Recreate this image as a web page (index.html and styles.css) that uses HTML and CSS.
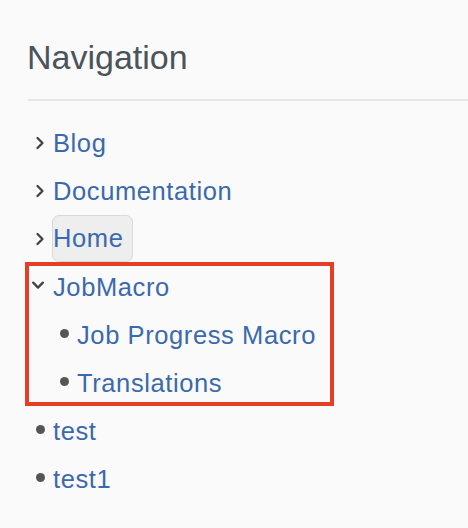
FILE: index.html
```html
<!DOCTYPE html>
<html lang="en">
<head>
<meta charset="utf-8">
<title>Navigation</title>
<link rel="stylesheet" href="styles.css">
</head>
<body>
<nav class="sidebar">
  <h2 class="title">Navigation</h2>
  <ul class="tree">
    <li class="node">
      <div class="row">
        <span class="icon"><svg width="24" height="24" viewBox="0 0 24 24"><path d="M9.5 7 L14.5 12 L9.5 17" class="chev"/></svg></span>
        <a class="link" href="#">Blog</a>
      </div>
    </li>
    <li class="node">
      <div class="row">
        <span class="icon"><svg width="24" height="24" viewBox="0 0 24 24"><path d="M9.5 7 L14.5 12 L9.5 17" class="chev"/></svg></span>
        <a class="link" href="#">Documentation</a>
      </div>
    </li>
    <li class="node">
      <div class="row">
        <span class="icon"><svg width="24" height="24" viewBox="0 0 24 24"><path d="M9.5 7 L14.5 12 L9.5 17" class="chev"/></svg></span>
        <a class="link link-active" href="#">Home</a>
      </div>
    </li>
    <li class="node node-marked">
      <div class="row">
        <span class="icon"><svg width="24" height="24" viewBox="0 0 24 24"><path d="M5.2 7.6 L10 12.6 L14.8 7.6" class="chev"/></svg></span>
        <a class="link" href="#">JobMacro</a>
      </div>
      <ul class="tree tree-nested">
        <li class="node">
          <div class="row">
            <span class="icon"><span class="dot"></span></span>
            <a class="link" href="#">Job Progress Macro</a>
          </div>
        </li>
        <li class="node">
          <div class="row">
            <span class="icon"><span class="dot"></span></span>
            <a class="link" href="#">Translations</a>
          </div>
        </li>
      </ul>
    </li>
    <li class="node">
      <div class="row">
        <span class="icon"><span class="dot"></span></span>
        <a class="link" href="#">test</a>
      </div>
    </li>
    <li class="node">
      <div class="row">
        <span class="icon"><span class="dot"></span></span>
        <a class="link" href="#">test1</a>
      </div>
    </li>
  </ul>
</nav>
</body>
</html>
```

FILE: styles.css
```css
html, body {
  margin: 0;
  padding: 0;
  background: #fafafa;
}

body {
  font-family: "Liberation Sans", Arial, Helvetica, sans-serif;
}

.sidebar {
  padding: 37px 0 0 28px;
}

.title {
  margin: 0;
  padding: 0 0 22px 0;
  font-size: 34px;
  line-height: 40px;
  font-weight: normal;
  color: #4b535b;
  border-bottom: 2px solid #e6e6e6;
  text-indent: -1px;
}

.tree {
  list-style: none;
  margin: 18px 0 0 0;
  padding: 0;
}

.tree-nested {
  margin: 0;
  padding-left: 24px;
}

.node-marked {
  position: relative;
}

.node-marked::after {
  content: "";
  position: absolute;
  left: -3px;
  top: -1px;
  width: 309px;
  height: 144px;
  border: 4px solid #e63d27;
  box-sizing: border-box;
  pointer-events: none;
}

.row {
  display: flex;
  align-items: center;
  height: 48px;
}

.icon {
  width: 24px;
  height: 24px;
  flex: none;
  display: flex;
  align-items: center;
  justify-content: center;
}

.icon svg {
  display: block;
}

.chev {
  fill: none;
  stroke: #444444;
  stroke-width: 2.3;
  stroke-linecap: round;
  stroke-linejoin: round;
}

.dot {
  display: block;
  width: 9px;
  height: 9px;
  border-radius: 50%;
  background: #555555;
  margin-top: -4px;
}

.link {
  margin-left: 1px;
  font-size: 25.5px;
  letter-spacing: 0.6px;
  line-height: 48px;
  color: #3a69ad;
  text-decoration: none;
}

.link-active {
  margin-left: 0;
  padding: 0 9px 0 0;
  line-height: 45px;
  background: #eeeeee;
  border: 1px solid #d9d9d9;
  border-radius: 7px;
  margin-top: -1px;
}
```
